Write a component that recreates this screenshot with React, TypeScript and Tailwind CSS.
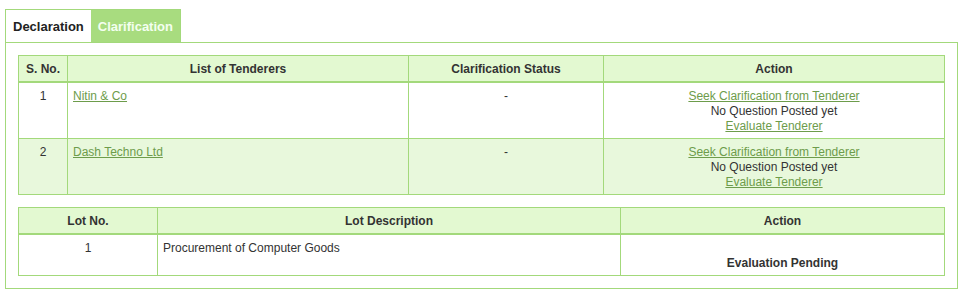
import React from 'react';

const tenderers = [
  { id: 1, name: 'Nitin & Co', status: '-' },
  { id: 2, name: 'Dash Techno Ltd', status: '-' },
];

const lots = [{ no: 1, description: 'Procurement of Computer Goods' }];

const th = 'border border-[#a3d97b] border-b-2 bg-[#e3f9d1] px-[5px] pt-[6px] pb-[4px] text-center font-bold leading-[15px]';
const td = 'border border-[#a3d97b] px-[5px] pt-[6px] pb-[4px] align-top leading-[15px]';
const link = 'text-[#6d9c4b] underline';

export default function App() {
  return (
    <div className="min-h-[294px] bg-white pt-[9px] pl-[5px] pr-[7px] font-['Liberation_Sans',Arial,sans-serif] text-[12px] text-[#333]">
      {/* Tabs */}
      <div className="flex">
        <button className="h-[33px] border-l border-t border-[#a3d97b] bg-white pt-[2px] pl-[7px] pr-[7px] text-[13px] font-bold text-[#222]">
          Declaration
        </button>
        <button className="h-[33px] border-t border-r border-[#a3d97b] bg-[#a8dc7f] pt-[2px] px-[7px] text-[13px] font-bold text-[#f4fff0]">
          Clarification
        </button>
      </div>

      {/* Panel */}
      <div className="flex flex-col gap-[12px] border border-[#a3d97b] p-[12px]">
        <table className="w-full border-collapse">
          <thead>
            <tr>
              <th className={`${th} w-[49px]`}>S. No.</th>
              <th className={`${th} w-[341px]`}>List of Tenderers</th>
              <th className={`${th} w-[195px]`}>Clarification Status</th>
              <th className={th}>Action</th>
            </tr>
          </thead>
          <tbody>
            {tenderers.map((t, i) => (
              <tr key={t.id} className={i % 2 === 1 ? 'bg-[#e8f8dc]' : 'bg-white'}>
                <td className={`${td} text-center`}>{t.id}</td>
                <td className={td}>
                  <a href="#" className={link}>{t.name}</a>
                </td>
                <td className={`${td} text-center`}>{t.status}</td>
                <td className={`${td} text-center`}>
                  <a href="#" className={link}>Seek Clarification from Tenderer</a>
                  <div>No Question Posted yet</div>
                  <a href="#" className={link}>Evaluate Tenderer</a>
                </td>
              </tr>
            ))}
          </tbody>
        </table>

        <table className="w-full border-collapse">
          <thead>
            <tr>
              <th className={`${th} w-[139px]`}>Lot No.</th>
              <th className={`${th} w-[463px]`}>Lot Description</th>
              <th className={th}>Action</th>
            </tr>
          </thead>
          <tbody>
            {lots.map((l) => (
              <tr key={l.no}>
                <td className={`${td} text-center`}>{l.no}</td>
                <td className={td}>{l.description}</td>
                <td className={`${td} text-center`}>
                  <div>&nbsp;</div>
                  <div className="font-bold">Evaluation Pending</div>
                </td>
              </tr>
            ))}
          </tbody>
        </table>
      </div>
    </div>
  );
}
